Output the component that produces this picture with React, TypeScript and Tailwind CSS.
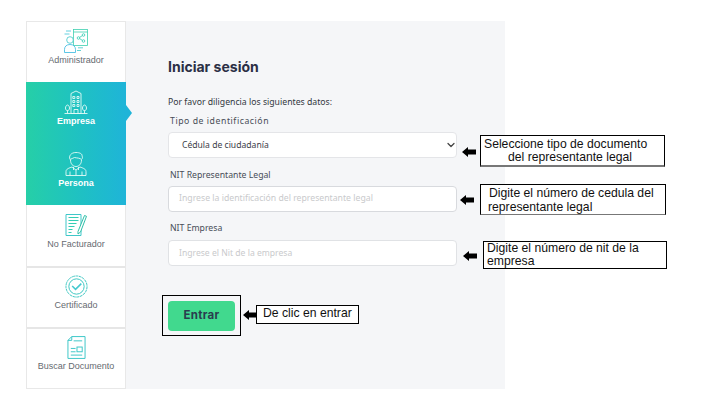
import React from 'react';
import { ChevronDown } from 'lucide-react';

const teal = '#35cdb4';

const AdminIcon = () => (
  <svg width="24" height="24" viewBox="0 0 24 24" fill="none" stroke={teal} strokeWidth="0.8">
    <rect x="9.500" y="0.500" width="14" height="16" stroke="#3fd0b0" />
    <path d="M9.500 3h14" stroke="#3fd0b0" />
    <circle cx="14.500" cy="9" r="1.300" />
    <circle cx="19.500" cy="6" r="1.300" />
    <circle cx="19.500" cy="12" r="1.300" />
    <path d="M15.700 8.300l2.600-1.600M15.700 9.700l2.600 1.600" />
    <path d="M2 2h5M0.500 5h5" stroke="#3cc4d8" />
    <circle cx="6" cy="11" r="3.300" fill="#fff" stroke="#3fc7c9" />
    <path d="M0.500 23.500v-3c0-3 2-5 5.500-5s5.500 2 5.500 5v3z" fill="#fff" stroke="#35b8e0" />
    <path d="M13 21.500h4M14 18.800h5" stroke="#3fc7c9" />
  </svg>
);

const BuildingIcon = () => (
  <svg width="24" height="24" viewBox="0 0 24 24" fill="none" stroke="#e4fbf6" strokeWidth="0.9">
    <path d="M7 23.500V3.500l5-2.500 5 2.500v20z" />
    <path d="M8.800 6.500h2v2h-2zM13 6.500h2v2h-2zM8.800 10.500h2v2h-2zM13 10.500h2v2h-2zM8.800 14.500h2v2h-2zM13 14.500h2v2h-2zM10 23.500v-4h4v4" />
    <path d="M0.500 23.500h23" />
    <path d="M3.500 23.500v-3M3.500 20.500c-1.500 0-2-1-2-2.500s1-3 2-3 2 1.500 2 3-.5 2.500-2 2.500z" />
    <path d="M20.500 23.500v-3M20.500 20.500c-1.500 0-2-1-2-2.500s1-3 2-3 2 1.500 2 3-.5 2.500-2 2.500z" />
  </svg>
);

const PersonIcon = () => (
  <svg width="22" height="24" viewBox="0 0 22 24" fill="none" stroke="#e4fbf6" strokeWidth="0.9">
    <path d="M5.500 8c0 4 2.500 6.500 5.500 6.500s5.500-2.500 5.500-6.500" />
    <path d="M5 7.500C3.500 4 6 .5 11 .5c4 0 6.500 1.500 6 3.500.8 1 .5 2.500-.5 3.500C15 6 12 6 9.500 5.500 8 6.500 6.500 6.500 5 7.500z" />
    <path d="M1 23.500v-4c0-2.500 3-3.500 6-4.500l4 3 4-3c3 1 6 2 6 4.500v4z" />
    <path d="M8.500 15v3M13.500 15v3M5 19.500v4M17 19.500v4M11 18v5.500" />
  </svg>
);

const InvoiceIcon = () => (
  <svg width="22" height="22" viewBox="0 0 22 22" fill="none" stroke={teal} strokeWidth="1">
    <path d="M16 21.500V.5H1v21z" stroke="#3fc7c9" />
    <path d="M3.500 3.500h10M3.500 6.500h10M3.500 9.500h8M3.500 12.500h6M3.500 15.500h4M3.500 18.500h3" strokeWidth="1.100" />
    <path d="M13 17.500l6.500-16 2 .8-6 15.700-2.500 2z" fill="#fff" stroke="#2fbfa8" />
  </svg>
);

const SealIcon = () => (
  <svg width="23" height="23" viewBox="0 0 24 24" fill="none" stroke="#39c6c0" strokeWidth="1">
    <circle cx="12" cy="12" r="11" strokeDasharray="3 0.600" />
    <circle cx="12" cy="12" r="8" />
    <path d="M7.500 11.500l3.500 3.500 6-6" strokeWidth="1.600" stroke="#45c9cf" />
  </svg>
);

const DocIcon = () => (
  <svg width="19" height="23" viewBox="0 0 20 24" fill="none" stroke="#37c5c6" strokeWidth="1">
    <path d="M5 .5h14v23H1V4.500z" />
    <path d="M5 .5v4H1M7 5h9M4 13h5M4 16.500h5" />
    <rect x="10.500" y="11.500" width="5.500" height="5" />
    <path d="M4 20h12" />
  </svg>
);

const NavItem = ({ icon, label, active, divider }: { icon: React.ReactNode; label: string; active?: boolean; divider?: boolean }) => (
  <div
    className={`flex flex-col items-center ${active ? 'h-[61.5px]' : 'h-[61px] bg-white'} ${
      divider ? 'border-t-2 border-[#e6e6e6] pt-[6px]' : 'pt-[8px]'
    }`}
  >
    <div className="flex h-[24px] items-center justify-center">{icon}</div>
    <span
      className={
        active
          ? 'text-[9px] leading-[14px] font-bold text-white'
          : 'text-[9px] leading-[14px] text-[#666a70]'
      }
    >
      {label}
    </span>
  </div>
);

const FieldLabel = ({ children, wide }: { children: React.ReactNode; wide?: boolean }) => (
  <label className={`ml-[2px] block text-[8.700px] leading-[12px] text-[#484d57] ${wide ? 'tracking-[0.55px]' : ''}`}>{children}</label>
);

const LeftArrow = ({ className }: { className: string }) => (
  <svg className={`absolute ${className}`} width="14" height="10" viewBox="0 0 14 10">
    <path d="M0 5L6 0v2.500h8v5H6V10z" fill="#000" />
  </svg>
);

const Note = ({ className, children }: { className: string; children: React.ReactNode }) => (
  <div className={`absolute border border-black bg-white font-['Liberation_Sans',sans-serif] text-[12.200px] text-[#111] ${className}`}>
    {children}
  </div>
);

export default function App() {
  return (
    <div className="relative h-[408px] w-[724px] overflow-hidden bg-white font-['Noto_Sans',sans-serif]">
      <div className="ml-[26px] flex h-[368px] w-[479px] translate-y-[21px] bg-[#f5f6f8]">
        {/* Sidebar */}
        <div className="relative w-[100px] shrink-0 border-x border-[#e8e8e8] bg-white font-['Liberation_Sans',sans-serif]">
          <div className="absolute inset-x-0 top-0 h-px bg-[#e8e8e8]" />
          <div className="absolute inset-x-0 bottom-0 h-px bg-[#e8e8e8]" />
          <NavItem icon={<AdminIcon />} label="Administrador" />
          <div className="relative -mx-[1px] bg-gradient-to-r from-[#26cfa7] to-[#1fb4d8]">
            <NavItem icon={<BuildingIcon />} label="Empresa" active />
            <NavItem icon={<PersonIcon />} label="Persona" active />
            <div className="absolute top-[23px] -right-[6px] h-0 w-0 border-y-[8px] border-l-[6px] border-y-transparent border-l-[#1fb4d8]" />
          </div>
          <NavItem icon={<InvoiceIcon />} label="No Facturador" />
          <NavItem icon={<SealIcon />} label="Certificado" divider />
          <NavItem icon={<DocIcon />} label="Buscar Documento" divider />
        </div>

        {/* Login form */}
        <div className="ml-[42px] flex w-[289px] flex-col pt-[36px]">
          <h1 className="font-['Inter',sans-serif] text-[14px] leading-[20px] font-bold text-[#2b2f45]">Iniciar sesión</h1>
          <p className="mt-[19px] text-[8.700px] leading-[12px] text-[#33383f]">Por favor diligencia los siguientes datos:</p>
          <div className="mt-[7px]">
            <FieldLabel wide>Tipo de identificación</FieldLabel>
          </div>
          <div className="mt-[5px] flex h-[26px] items-center justify-between rounded-[4px] border border-[#e4e5e8] bg-white pl-[13px]">
            <span className="pt-[1px] text-[8.600px] text-[#3c4048]">Cédula de ciudadanía</span>
            <ChevronDown size={12} strokeWidth={2.500} color="#444" className="-mr-[1px]" />
          </div>
          <div className="mt-[11px]">
            <FieldLabel>NIT Representante Legal</FieldLabel>
          </div>
          <div className="mt-[5px] flex h-[26px] items-center rounded-[4px] border border-[#d8dade] bg-white pl-[10px]">
            <span className="text-[8.700px] text-[#c9cacc]">Ingrese la identificación del representante legal</span>
          </div>
          <div className="mt-[10px]">
            <FieldLabel>NIT Empresa</FieldLabel>
          </div>
          <div className="mt-[6px] flex h-[26px] items-center rounded-[4px] border border-[#e0e2e5] bg-white pl-[10px]">
            <span className="text-[8.600px] text-[#c9cacc]">Ingrese el Nit de la empresa</span>
          </div>
          <button className="mt-[35px] h-[30px] w-[67px] rounded-[4px] bg-[#41d98e] font-['Inter',sans-serif] text-[11.500px] font-bold tracking-[0.3px] text-[#2a3d4f]">
            Entrar
          </button>
        </div>
      </div>

      {/* Annotations over the screenshot */}
      <div className="absolute top-[295px] left-[162px] h-[41px] w-[79px] border border-black" />

      <LeftArrow className="top-[147px] left-[462px]" />
      <LeftArrow className="top-[195px] left-[460px]" />
      <LeftArrow className="top-[251px] left-[463px]" />
      <LeftArrow className="top-[310px] left-[243px]" />

      <Note className="top-[135px] left-[480px] h-[32px] w-[185px] border-b-2 border-b-[#777] pt-[2px] pl-[3px] leading-[13px]">
        Seleccione tipo de documento
        <br />
        <span className="pl-[24px]">del representante legal</span>
      </Note>
      <Note className="top-[184px] left-[480px] h-[31px] w-[186px] border-b-[#777] pt-[1px] leading-[14px]">
        <span className="pl-[8px]">Digite el número de cedula del</span>
        <br />
        <span className="pl-[7px]">representante legal</span>
      </Note>
      <Note className="top-[241px] left-[483px] h-[28px] w-[184px] pl-[3px] leading-[13px]">
        Digite el número de nit de la
        <br />
        empresa
      </Note>
      <Note className="top-[305px] left-[256px] h-[19px] w-[103px] border-[#777] bg-[#f5f6f8] pl-[6px] leading-[14px]">De clic en entrar</Note>
    </div>
  );
}
